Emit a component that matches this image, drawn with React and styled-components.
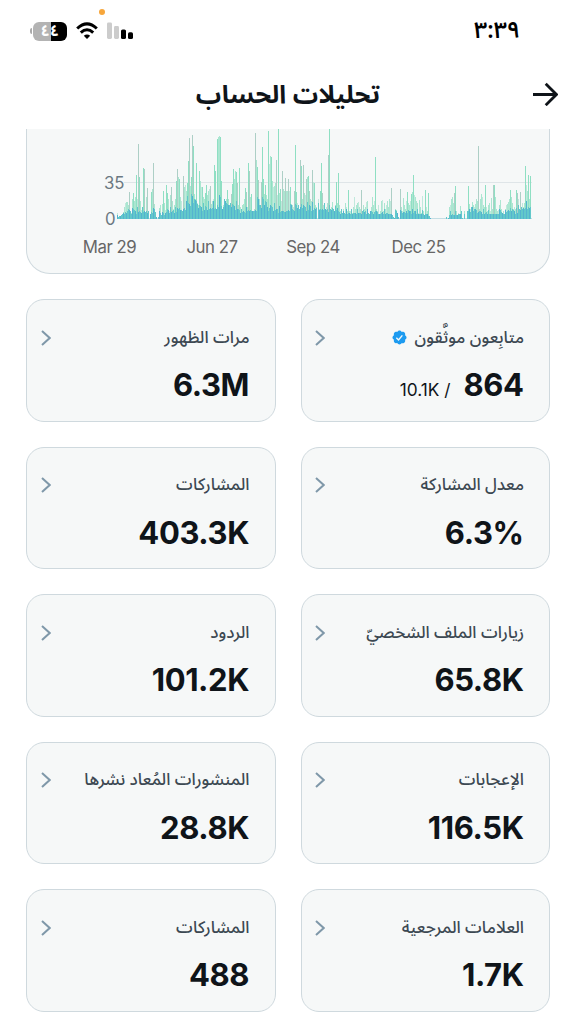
import styled, { createGlobalStyle } from "styled-components";

const latin = `Inter, "Liberation Sans", sans-serif`;
const arabic = `"Noto Sans Arabic", "Noto Sans", "DejaVu Sans", sans-serif`;

// one value per day, in chart pixels
const follows = [
    6,2,3,3,4,5,7,12,16,17, 17,14,27,8,6,20,26,18,22,44,
    20,75,42,18,9,12,51,50,7,22, 31,8,0,5,27,30,56,15,7,2,
    0,2,11,14,4,15,28,16,9,34, 26,20,8,24,32,18,10,14,20,38,
    50,42,40,22,18,8,43,32,34,28, 36,58,81,33,42,84,73,25,20,56,
    16,14,48,38,32,32,22,20,26,34, 24,28,30,33,15,18,20,54,48,10,
    80,82,83,82,38,10,14,20,18,20, 29,20,14,16,25,35,50,40,48,47,
    36,14,51,12,10,14,15,20,31,27, 12,56,48,22,25,8,8,10,86,59,
    52,39,20,14,37,72,40,25,34,24, 20,88,55,63,62,38,32,33,36,59,
    24,90,26,30,18,48,30,28,41,28, 28,40,28,32,15,14,12,28,74,27,
    16,14,10,59,53,20,54,26,24,40, 42,43,28,20,18,49,37,36,14,12,
    20,10,28,56,26,14,16,10,12,16, 64,90,10,12,17,10,8,14,37,16,
    46,14,8,10,6,10,6,16,12,8, 29,8,8,10,6,12,22,10,14,16,
    17,12,10,29,8,14,10,12,17,18, 6,5,8,12,22,14,18,62,10,8,
    14,5,8,18,19,8,16,10,14,18, 12,20,18,31,4,2,1,10,9,6,
    2,0,30,12,8,21,14,10,18,27, 16,14,18,25,27,44,24,22,18,16,
    6,19,12,6,23,8,4,29,12,8, 26,3,1,0,0,0,0,0,0,0,
    0,0,0,0,0,0,0,0,2,0, 1,12,14,20,22,16,26,33,8,4,
    6,5,13,8,1,0,8,0,0,8, 33,15,10,12,17,14,12,15,20,18,
    73,10,20,25,22,14,12,34,12,8, 14,16,8,21,10,34,34,22,10,8,
    9,14,19,10,6,8,5,10,14,15, 17,20,29,22,16,10,12,10,29,26,
    20,10,27,12,16,12,16,53,34,28, 44,20,43,
];

// upper bound of the unfollow bars, one value for every ten days
const bounds = [
    7, 12, 13, 11, 9, 13, 18, 25, 17, 19, 24, 19, 13, 15, 22, 17, 14, 15, 17, 18,
    17, 14, 10, 10, 10, 10, 10, 9, 9, 11, 9, 3, 6, 8, 9, 13, 10, 9, 10, 12, 19, 20,
];
const jitter = [0.55, 0.7, 1, 0.5, 0.8, 0.6, 0.45, 0.9, 0.6, 0.75, 0.5, 0.95, 0.65];

const bars = follows.map((value, day) => ({
    day,
    value,
    // a day that stands clear of the days beside it is drawn darker
    spike: value > 24 && value > 1.25 * Math.min(follows[day - 1] || 0, follows[day + 1] || 0),
    lost: Math.min(value, Math.round(bounds[Math.floor(day / 10)] * jitter[(day * 5 + (day >> 3)) % 13])),
}));

const months = ["Mar 29", "Jun 27", "Sep 24", "Dec 25"];

const cards = [
    { label: "متابِعون موثَّقون", value: "864", total: "/ 10.1K", verified: true },
    { label: "مرات الظهور", value: "6.3M" },
    { label: "معدل المشاركة", value: "6.3%" },
    { label: "المشاركات", value: "403.3K" },
    { label: "زيارات الملف الشخصيّ", value: "65.8K" },
    { label: "الردود", value: "101.2K" },
    { label: "الإعجابات", value: "116.5K" },
    { label: "المنشورات المُعاد نشرها", value: "28.8K" },
    { label: "العلامات المرجعية", value: "1.7K" },
    { label: "المشاركات", value: "488" },
];

function WifiIcon() {
    return (
        <svg width="22" height="18" viewBox="0 0 22 18" fill="none" stroke="#000" strokeWidth="3">
            <path d="M1.2 6.5Q11-2.8 20.8 6.5" />
            <path d="M4.8 10.6Q11 4.8 17.2 10.6" />
            <path d="M7.8 13.8Q11 11 14.2 13.8L11 17Z" fill="#000" stroke="none" />
        </svg>
    );
}

function SignalIcon() {
    return (
        <svg width="27" height="18" viewBox="0 0 27 18">
            <rect x="0" y="0.5" width="5" height="16.5" rx="1.4" fill="#ccc" />
            <rect x="7" y="4" width="5" height="13" rx="1.4" fill="#ccc" />
            <rect x="14" y="7.5" width="5" height="9.5" rx="1.6" />
            <rect x="21" y="10.3" width="5" height="6.7" rx="1.6" />
        </svg>
    );
}

function VerifiedIcon() {
    return (
        <svg width="15" height="15" viewBox="1 1 20 20">
            <path
                fill="#1d9bf0"
                d="M20.396 11c-.018-.646-.215-1.275-.57-1.816-.354-.54-.852-.972-1.438-1.246.223-.607.27-1.264.14-1.897-.131-.634-.437-1.218-.882-1.687-.47-.445-1.053-.75-1.687-.882-.633-.13-1.29-.083-1.897.14-.273-.587-.704-1.086-1.245-1.44S11.647 1.62 11 1.604c-.646.017-1.273.213-1.813.568s-.969.854-1.24 1.44c-.608-.223-1.267-.272-1.902-.14-.635.13-1.22.436-1.69.882-.445.47-.749 1.055-.878 1.688-.13.633-.08 1.29.144 1.896-.587.274-1.087.705-1.443 1.245-.356.54-.555 1.17-.574 1.817.02.647.218 1.276.574 1.817.356.54.856.972 1.443 1.245-.224.606-.274 1.263-.144 1.896.13.634.433 1.218.877 1.688.47.443 1.054.747 1.687.878.633.132 1.29.084 1.897-.136.274.586.705 1.084 1.246 1.439.54.354 1.17.551 1.816.569.647-.016 1.276-.213 1.817-.567s.972-.854 1.245-1.44c.604.239 1.266.296 1.903.164.636-.132 1.22-.447 1.68-.907.46-.46.776-1.044.908-1.681s.075-1.299-.165-1.903c.586-.274 1.084-.705 1.439-1.246.354-.54.551-1.17.569-1.816z"
            />
            <path fill="none" stroke="#f6f8f8" strokeWidth="1.9" d="M6.8 11.4L9.7 14.2L14.8 8.2" />
        </svg>
    );
}

function Chart() {
    return (
        <svg width="522" height="144" viewBox="27 129 522 144">
            <path d="M124 182.5H532" stroke="#dfe5e8" />
            <path d="M117 218.5H532" stroke="#c3dde3" />
            <g shapeRendering="crispEdges">
                {bars.map((bar) => (
                    <g key={bar.day}>
                        <rect
                            x={117 + Math.round(bar.day * 1.0025)}
                            y={219 - bar.value}
                            width="1"
                            height={bar.value}
                            fill={bar.spike ? (bar.day % 3 ? "#8fdfc3" : "#adcfc6") : bar.day % 4 ? "#abe6d1" : "#c0e9dc"}
                        />
                        <rect
                            x={117 + Math.round(bar.day * 1.0025)}
                            y={219 - bar.lost}
                            width="1"
                            height={bar.lost}
                            fill={bar.day % 3 ? "#62c8ca" : "#55b3d0"}
                        />
                    </g>
                ))}
            </g>
            <AxisText x="124.5" y="189" textAnchor="end">35</AxisText>
            <AxisText x="115.5" y="225" textAnchor="end">0</AxisText>
            {months.map((month, i) => (
                <AxisText key={month} x={[109.5, 212, 313, 418.5][i]} y="252.5" textAnchor="middle" $dark>
                    {month}
                </AxisText>
            ))}
        </svg>
    );
}

export default function App() {
    return (
        <Page>
            <GlobalStyle />
            <StatusBar>
                <Battery>
                    <BatteryBody>٤٤</BatteryBody>
                </Battery>
                <WifiIcon />
                <SignalIcon />
                <RecordingDot />
                <Time>٣:٣٩</Time>
            </StatusBar>
            <Header>
                <Title>تحليلات الحساب</Title>
                <Back aria-label="رجوع">
                    <svg width="26" height="24" viewBox="0 0 26 24" fill="none" stroke="#0f1419" strokeWidth="2.8">
                        <path d="M1 12.5H24.5M13.7 1.8L24.4 12.5L13.7 23.2" />
                    </svg>
                </Back>
            </Header>
            <ChartCard>
                <Chart />
            </ChartCard>
            <Grid>
                {cards.map((card) => (
                    <Card key={card.value}>
                        <CardTop>
                            <Label>{card.label}</Label>
                            {card.verified && <VerifiedIcon />}
                            <Chevron width="10" height="16" viewBox="0 0 10 16">
                                <path d="M1 1L8.7 8L1 15" />
                            </Chevron>
                        </CardTop>
                        <Numbers>
                            <Value>{card.value}</Value>
                            {card.total && <Total>{card.total}</Total>}
                        </Numbers>
                    </Card>
                ))}
            </Grid>
        </Page>
    );
}

const GlobalStyle = createGlobalStyle`
    * {
        box-sizing: border-box;
    }
    body {
        margin: 0;
        background: #fff;
    }
`;

const Page = styled.div`
    width: 576px;
    height: 1024px;
    overflow: hidden;
    background: #fff;
    color: #0f1419;
    font-family: ${latin};
`;

const StatusBar = styled.div`
    position: relative;
    height: 62px;
    display: flex;
    align-items: center;
    padding: 0 56px 0 30px;
    & svg {
        flex: none;
    }
    & svg + svg {
        margin-left: 9px;
    }
`;

const Battery = styled.div`
    display: flex;
    align-items: center;
    margin-right: 9px;
    &::before {
        content: "";
        width: 2px;
        height: 6px;
        margin-right: 1px;
        border-radius: 2px 0 0 2px;
        background: #aaa;
    }
`;

const BatteryBody = styled.div`
    width: 34px;
    height: 19px;
    border-radius: 6px;
    background: linear-gradient(90deg, #b3b3b3 54%, #000 54%);
    color: #fff;
    font: bold 16px/18px ${arabic};
    text-align: center;
`;

const RecordingDot = styled.i`
    position: absolute;
    left: 99px;
    top: 9px;
    width: 6px;
    height: 6px;
    border-radius: 50%;
    background: #f7a63b;
`;

const Time = styled.div`
    margin-left: auto;
    font: 600 23px/30px ${arabic};
    color: #000;
`;

const Header = styled.header`
    height: 67px;
    display: flex;
    align-items: center;
    padding: 0 18px 3px 44px;
`;

const Title = styled.h1`
    flex: 1;
    margin: 0;
    padding-top: 2px;
    direction: rtl;
    text-align: center;
    font: bold 25.2px/40px ${arabic};
`;

const Back = styled.button`
    display: flex;
    padding: 0;
    border: 0;
    background: none;
`;

const ChartCard = styled.section`
    width: 524px;
    height: 145px;
    margin-left: 26px;
    border: 1.5px solid #cfd9de;
    border-top: 0;
    border-radius: 0 0 24px 24px;
    background: #f6f8f8;
    overflow: hidden;
    & svg {
        display: block;
    }
`;

const AxisText = styled.text`
    font-family: ${latin};
    font-size: 16.8px;
    letter-spacing: ${(props) => (props.$dark ? "-0.45px" : "0")};
    fill: ${(props) => (props.$dark ? "#666" : "#6b7882")};
`;

const Grid = styled.main`
    direction: rtl;
    display: grid;
    grid-template-columns: 249.5px 249.5px;
    grid-auto-rows: 122.5px;
    gap: 25px;
    padding: 25px 26px;
`;

const Card = styled.section`
    border: 1.5px solid #cfd9de;
    border-radius: 18px;
    background: #f6f8f8;
    padding: 21px 25px 0 13.5px;
`;

const CardTop = styled.div`
    display: flex;
    align-items: center;
    gap: 7px;
    height: 33px;
`;

const Label = styled.span`
    font: 500 16.8px/32px ${arabic};
    color: #3c4852;
    white-space: nowrap;
`;

const Chevron = styled.svg`
    margin-right: auto;
    fill: none;
    stroke: #7f98a9;
    stroke-width: 2;
`;

const Numbers = styled.div`
    display: flex;
    align-items: baseline;
    gap: 13px;
    margin-top: 11px;
`;

const Value = styled.strong`
    direction: ltr;
    font-size: 31px;
    line-height: 40px;
    font-weight: 680;
    letter-spacing: -0.4px;
    margin-right: 0.4px;
`;

const Total = styled.span`
    font-size: 17.3px;
    font-weight: 400;
`;
